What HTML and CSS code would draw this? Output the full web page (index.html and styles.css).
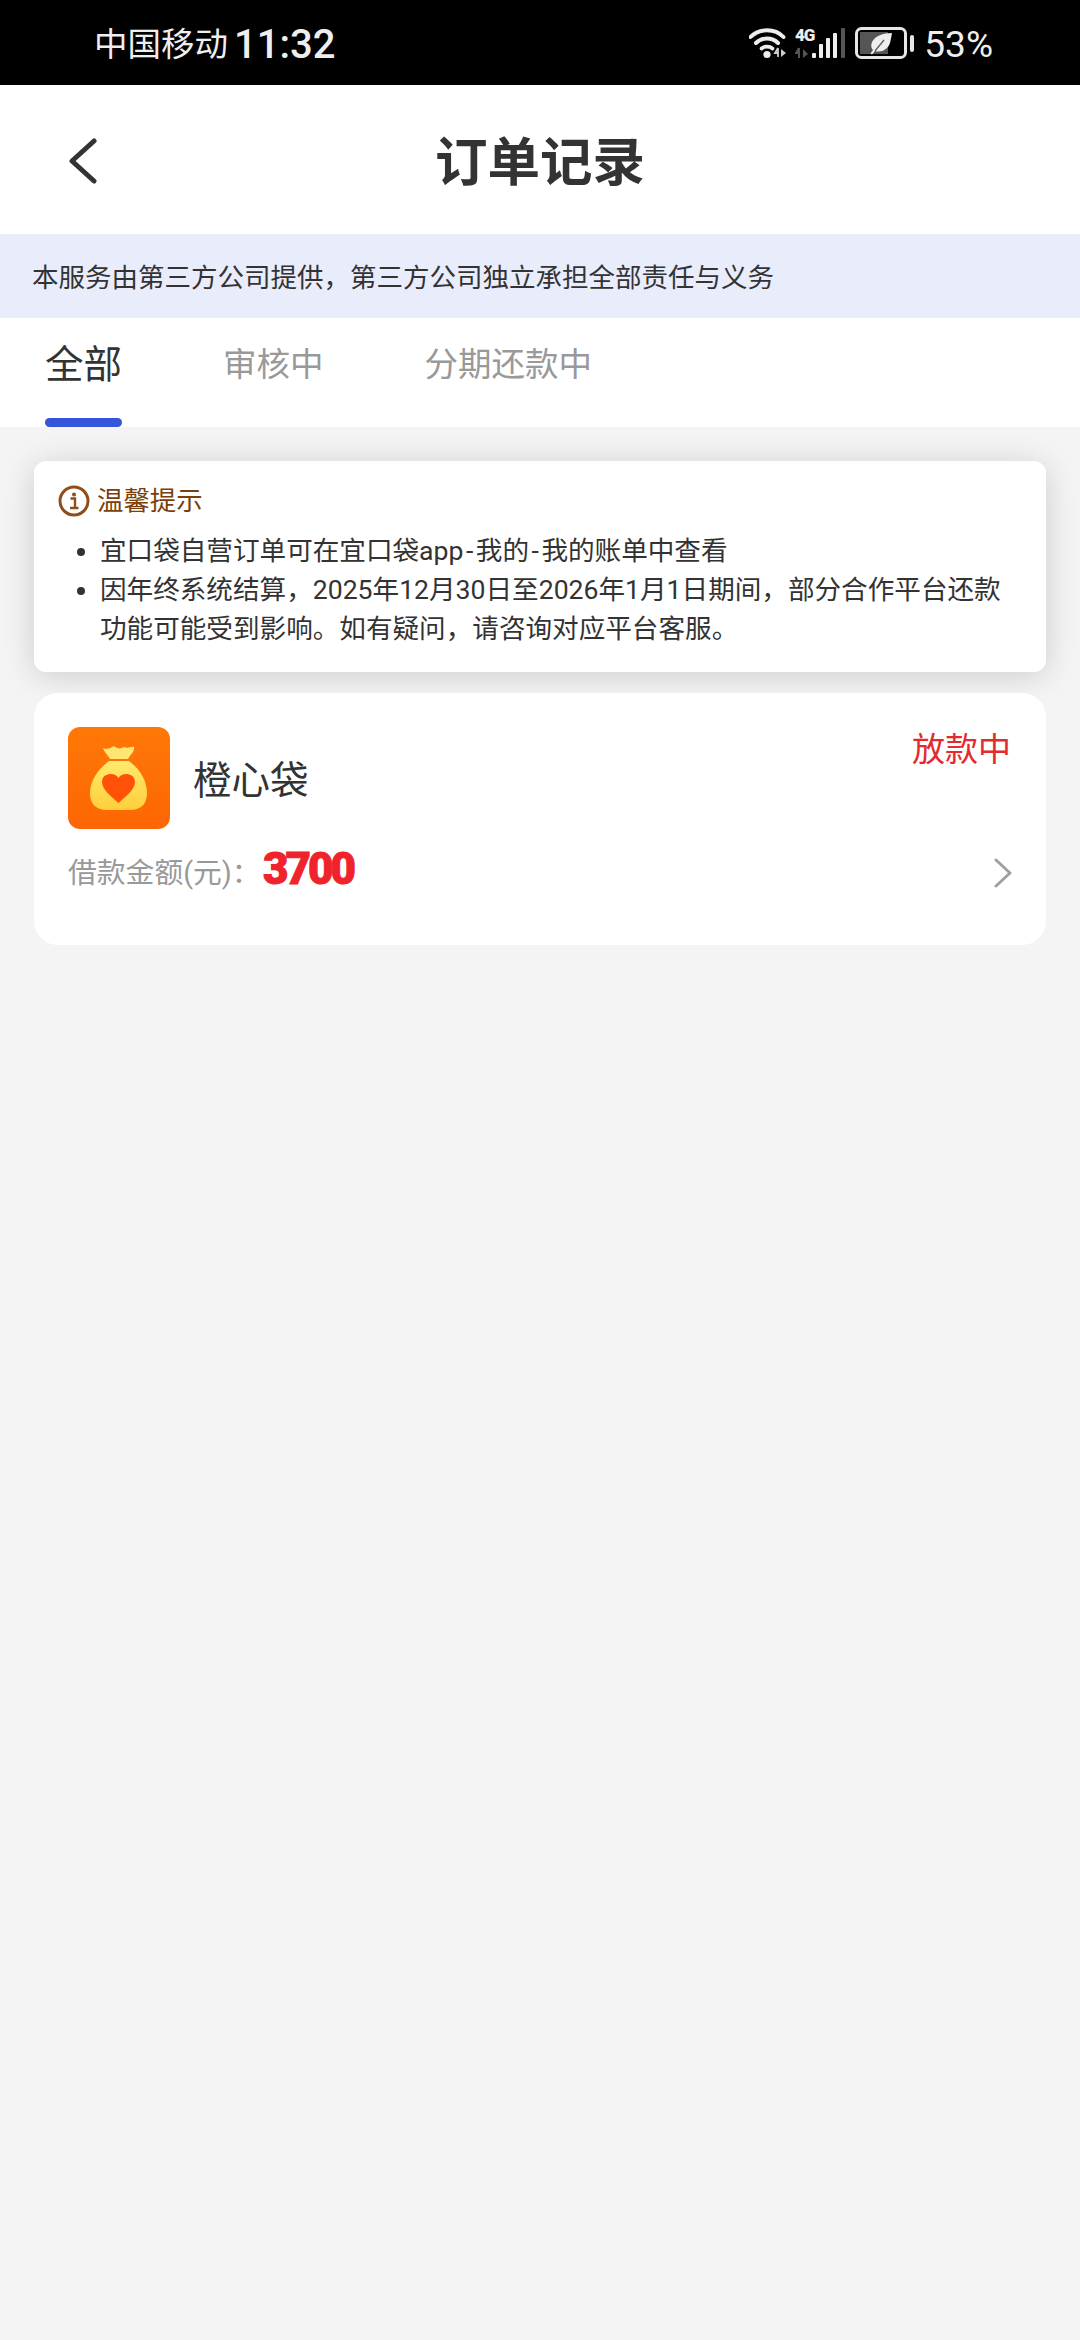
FILE: index.html
```html
<!DOCTYPE html>
<html lang="zh-CN">
<head>
<meta charset="utf-8">
<title>订单记录</title>
<link rel="stylesheet" href="styles.css">
</head>
<body>
<div class="app">
  <div class="status-bar">
    <div class="status-left"><span class="carrier">中国移动</span><span class="clock">11:32</span></div>
    <div class="status-right">
      <svg class="ic-wifi" width="40" height="32" viewBox="0 0 40 32">
        <path d="M1.5 10 C10 1 26 1 34.5 10" fill="none" stroke="#eee" stroke-width="4" stroke-linecap="round"/>
        <path d="M7 16 C13 10 23 10 29 16" fill="none" stroke="#eee" stroke-width="4" stroke-linecap="round"/>
        <path d="M12.5 21.5 C15.5 19 20.500 19 23.500 21.5" fill="none" stroke="#eee" stroke-width="3.6" stroke-linecap="round"/>
        <circle cx="18" cy="27.500" r="3.600" fill="#eee"/>
        <path d="M29 21 V30 M29 21 L26 26 H29" fill="none" stroke="#ccc" stroke-width="1.800"/>
        <path d="M32 22 V30 L37 26 Z" fill="#ccc"/>
      </svg>
      <svg class="ic-signal" width="52" height="40" viewBox="0 -4 52 40">
        <text class="net" x="0" y="14">4G</text>
        <path d="M4 21 V31 M4 21 L1 26 H4" fill="none" stroke="#555" stroke-width="2"/>
        <path d="M8 22 V31 L13 27 Z" fill="#555"/>
        <rect x="17" y="26" width="4" height="5" rx="1" fill="#eee"/>
        <rect x="24" y="17" width="4" height="14" rx="1" fill="#eee"/>
        <rect x="31" y="11" width="4" height="20" rx="1" fill="#eee"/>
        <rect x="38" y="6" width="4" height="25" rx="1" fill="#eee"/>
        <rect x="46" y="1" width="4" height="30" rx="1" fill="#555"/>
      </svg>
      <svg class="ic-battery" width="60" height="32" viewBox="0 0 60 32">
        <rect x="1.500" y="1.500" width="49" height="29" rx="5" fill="none" stroke="#e6e6e6" stroke-width="3"/>
        <path d="M5 5 H33 V27 H5 Z" fill="#555"/>
        <rect x="55" y="8" width="4" height="17" rx="2" fill="#e6e6e6"/>
        <path d="M37 6 C28 6 20 9 17 15 C15.500 19 16.500 21 18 23 L15.500 26.500 L17 27.500 L20 24 C27 26 33 22 35 16 C36 12 36.500 9 37 6 Z" fill="#eee"/>
        <path d="M20 24 L29 13" fill="none" stroke="#555" stroke-width="1.200"/>
      </svg>
      <span class="battery-pct">53%</span>
    </div>
  </div>

  <header class="nav">
    <div class="nav-side">
      <svg width="30" height="46" viewBox="0 0 30 46"><path d="M26 3 L4 23 L26 43" fill="none" stroke="#333" stroke-width="5" stroke-linecap="round" stroke-linejoin="round"/></svg>
    </div>
    <h1 class="nav-title">订单记录</h1>
    <div class="nav-side"></div>
  </header>

  <div class="notice">本服务由第三方公司提供，第三方公司独立承担全部责任与义务</div>

  <nav class="tabs">
    <div class="tab tab-active"><span class="tab-label">全部</span><i class="tab-line"></i></div>
    <div class="tab"><span class="tab-label">审核中</span></div>
    <div class="tab"><span class="tab-label">分期还款中</span></div>
  </nav>

  <main class="content">
    <section class="tip-card">
      <div class="tip-head">
        <svg width="32" height="32" viewBox="0 0 32 32">
          <circle cx="16" cy="16" r="14" fill="none" stroke="#8f4d1c" stroke-width="3"/>
          <circle cx="16" cy="9.500" r="2" fill="#8f4d1c"/>
          <path d="M12.500 13.500 H17 V22.500 M12 23 H20.500" fill="none" stroke="#8f4d1c" stroke-width="2.400"/>
        </svg>
        <span class="tip-title">温馨提示</span>
      </div>
      <ul class="tip-list">
        <li>宜口袋自营订单可在宜口袋app<span class="hy">-</span>我的<span class="hy">-</span>我的账单中查看</li>
        <li>因年终系统结算，2025年12月30日至2026年1月1日期间，部分合作平台还款功能可能受到影响。如有疑问，请咨询对应平台客服。</li>
      </ul>
    </section>

    <section class="order-card">
      <div class="order-top">
        <svg class="order-logo" width="102" height="102" viewBox="0 0 102 102">
          <defs>
            <linearGradient id="bg" x1="0" y1="0" x2="0" y2="1"><stop offset="0" stop-color="#ff7807"/><stop offset="1" stop-color="#fd6605"/></linearGradient>
            <linearGradient id="bag" x1="0" y1="0" x2="0" y2="1"><stop offset="0" stop-color="#ffea6e"/><stop offset="1" stop-color="#ffcf3a"/></linearGradient>
          </defs>
          <rect width="102" height="102" rx="12" fill="url(#bg)"/>
          <path d="M35 21 C40 23 42 21 46 19 C49 22 53 22 56 20 C60 22 63 19 66 20 C67 24 63 27 60 32 H42 C40 28 36 25 35 21 Z" fill="#ffe572"/>
          <path d="M41 34 H61 C72 42 79 54 79 66 C79 78 72 83 62 83 H39 C29 83 22 78 22 66 C22 54 30 42 41 34 Z" fill="url(#bag)"/>
          <path d="M50.500 76 C44 70 34 63 34 55 C34 49 39 47 43 47 C46 47 49 48.500 50.500 51 C52 48.500 55 47 58 47 C62 47 67 49 67 55 C67 63 57 70 50.500 76 Z" fill="#ff5208"/>
        </svg>
        <span class="order-name">橙心袋</span>
        <span class="order-status">放款中</span>
      </div>
      <div class="order-bottom">
        <span class="amount-label">借款金额(元)：</span>
        <span class="amount-value">3700</span>
        <svg class="order-arrow" width="18" height="30" viewBox="0 0 18 30"><path d="M2 2 L16 15 L2 28" fill="none" stroke="#a0a0a0" stroke-width="3" stroke-linecap="round" stroke-linejoin="round"/></svg>
      </div>
    </section>
  </main>
</div>
</body>
</html>
```

FILE: styles.css
```css
* { box-sizing: border-box; }
html, body { margin: 0; padding: 0; }
body {
  width: 1080px;
  height: 2340px;
  background: #f4f4f4;
  font-family: "Roboto", "Noto Sans CJK SC", sans-serif;
  color: #333;
  overflow: hidden;
}
.app { display: flex; flex-direction: column; height: 2340px; }

.status-bar {
  height: 85px;
  background: #000;
  color: #eee;
  display: flex;
  align-items: center;
  justify-content: space-between;
  padding: 0 87px 0 94px;
}
.status-left { display: flex; align-items: center; gap: 6px; font-size: 33.500px; line-height: 40px; margin-top: 5px; }
.clock { font-size: 40px; font-weight: 500; }
.status-right { display: flex; align-items: center; }
.ic-wifi { margin-right: 6px; margin-left: 3px; }
.ic-signal { margin-right: 8px; }
.ic-battery { margin-right: 9px; }
.net { font: 900 17px "Roboto", sans-serif; letter-spacing: -1px; fill: #eee; }
.battery-pct { line-height: 40px; font-size: 37px; margin-top: 4px; }

.nav {
  height: 149px;
  background: #fff;
  display: grid;
  grid-template-columns: 1fr auto 1fr;
  align-items: center;
}
.nav-side { padding-left: 68px; display: flex; align-items: center; margin-top: 2px; }
.nav-title { margin: 6px 0 0; font-size: 52.500px; font-weight: 700; color: #333; line-height: 60px; }

.notice {
  height: 84px;
  background: #e9ecfb;
  padding: 0 0 2px 32px;
  display: flex;
  align-items: center;
  font-size: 26.500px;
  color: #333;
}

.tabs {
  position: relative;
  height: 109px;
  background: #fff;
  display: flex;
  gap: 101px;
  padding-left: 45px;
}
.tab { display: flex; flex-direction: column; align-items: center; padding-top: 22px; }
.tab-label { font-size: 33.500px; line-height: 50px; color: #999; }
.tab-active .tab-label { font-size: 38.500px; color: #333; }
.tab-line { display: block; margin-top: auto; width: 77px; height: 9px; border-radius: 5px; background: #3556db; }

.content { display: flex; flex-direction: column; gap: 21px; padding: 34px 34px 0; }

.tip-card {
  background: #fff;
  border-radius: 12px;
  box-shadow: 0 4px 32px rgba(0, 0, 0, 0.16);
  padding: 24px 34px 24px 24px;
  height: 211px;
}
.tip-head { display: flex; align-items: center; gap: 7px; height: 32px; }
.tip-title { font-size: 26.400px; color: #7a3f0a; line-height: 32px; }
.tip-list { margin: 14px 0 0; padding: 0 0 0 42px; font-size: 26.600px; line-height: 39px; color: #333; }
.hy { padding: 0 2.500px; }

.order-card {
  background: #fff;
  border-radius: 24px;
  height: 252px;
  padding: 34px 35px 0 34px;
}
.order-top { display: flex; align-items: flex-start; }
.order-logo { display: block; flex: none; margin-right: 23px; }
.order-name { font-size: 38.500px; line-height: 102px; color: #333; margin-top: 3px; }
.order-status { margin-left: auto; font-size: 33px; line-height: 46px; color: #e32a2e; }
.order-bottom { display: flex; align-items: center; height: 50px; margin-top: 16px; }
.amount-label { font-size: 28.800px; color: #999; width: 195px; white-space: nowrap; margin-top: -5px; }
.amount-value { font-size: 44px; font-weight: 900; color: #f0222b; letter-spacing: -3px; margin-top: -8px; -webkit-text-stroke: 1px #f0222b; }
.order-arrow { margin-left: auto; margin-right: -1px; }
```
